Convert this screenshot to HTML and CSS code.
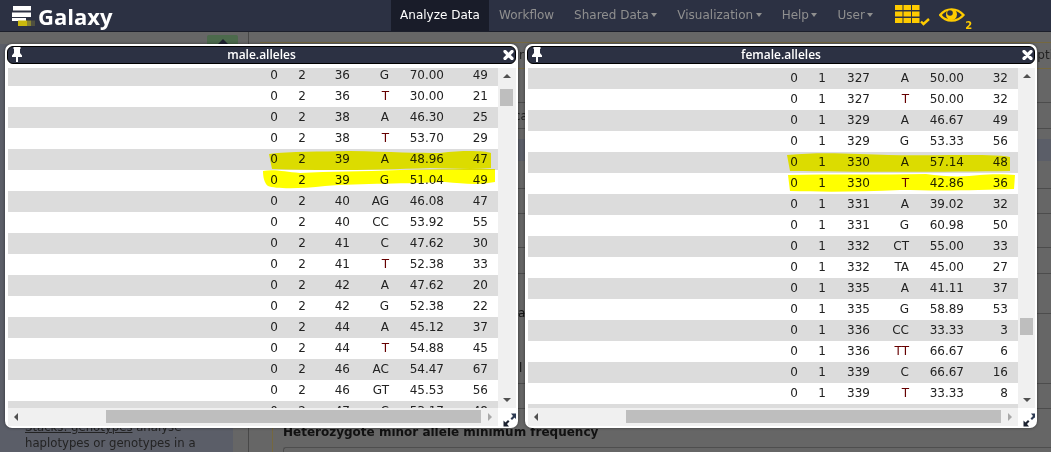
FILE: index.html
```html
<!DOCTYPE html>
<html lang="en">
<head>
<meta charset="utf-8">
<title>Galaxy</title>
<link rel="stylesheet" href="styles.css">
</head>
<body>
<header class="masthead">
  <div class="brand">
    <svg class="logo" width="25" height="24" viewBox="0 0 25 24">
      <rect x="2" y="0" width="18" height="4.500" fill="#fff"/>
      <rect x="1" y="6.500" width="19" height="4.500" fill="#fff"/>
      <rect x="1" y="12" width="14" height="3" fill="#fff"/>
      <rect x="7" y="14.500" width="9" height="5.500" fill="#c9b80c"/>
      <rect x="16" y="14.500" width="4" height="5.500" fill="#8a8530"/>
      <rect x="20" y="14.500" width="4" height="5.500" fill="#4f5040"/>
    </svg>
    <span class="brand-name">Galaxy</span>
  </div>
  <nav class="nav">
    <a class="nav-item active">Analyze Data</a>
    <a class="nav-item">Workflow</a>
    <a class="nav-item caret">Shared Data</a>
    <a class="nav-item caret">Visualization</a>
    <a class="nav-item caret">Help</a>
    <a class="nav-item caret">User</a>
  </nav>
  <div class="status">
    <svg class="grid-icon" width="36" height="27" viewBox="0 0 36 27">
      <g fill="#fecb00">
        <rect x="0" y="5" width="7.500" height="5"/><rect x="8.500" y="5" width="7.500" height="5"/><rect x="17" y="5" width="7.500" height="5"/>
        <rect x="0" y="11.500" width="7.500" height="5"/><rect x="8.500" y="11.500" width="7.500" height="5"/><rect x="17" y="11.500" width="7.500" height="5"/>
        <rect x="0" y="18" width="7.500" height="5"/><rect x="8.500" y="18" width="7.500" height="5"/><rect x="17" y="18" width="7.500" height="5"/>
      </g>
      <path d="M26 21.500 l2.500 2.500 l5.500-5" fill="none" stroke="#fecb00" stroke-width="2.400"/>
    </svg>
    <span class="eye-icon">
      <svg width="26" height="27" viewBox="0 0 26 27">
        <path d="M1.200 15 C7 7.500 18 7.500 24.500 15 C18 22.500 7 22.500 1.200 15Z" fill="none" stroke="#fecb00" stroke-width="2.400"/>
        <circle cx="12.500" cy="14.500" r="5.500" fill="#fecb00"/>
        <circle cx="11" cy="13" r="2.800" fill="#2c3143"/>
      </svg>
      <span class="eye-count">2</span>
    </span>
  </div>
</header>

<main class="backdrop">
  <aside class="tool-panel">
    <div class="collapse-tab"><span class="collapse-arrow"></span></div>
    <p class="tool-help"><u>Stacks: genotypes</u> analyse<br>haplotypes or genotypes in a</p>
  </aside>
  <section class="center">
    <div class="band"></div>
    <div class="form">
      <div class="line l34"></div>
      <div class="line l26"></div>
      <div class="gap10"></div>
      <div class="selected"></div>
      <div class="line l28"></div>
      <div class="line l25"></div>
      <div class="line l34"></div>
      <div class="line l26"></div>
      <div class="line l40"></div>
      <div class="line l70"></div>
      <div class="line l25"></div>
      <h4 class="form-label">Heterozygote minor allele minimum frequency</h4>
      <div class="form-input"></div>
    </div>
    <span class="peek opti">opti</span>
    <span class="peek gap-r">r</span>
    <span class="peek gap-c">ca</span>
    <span class="peek gap-a">a</span>
    <span class="peek gap-l">l</span>
  </section>
</main>

<article class="window left-win">
  <div class="title-bar">
    <svg class="pin" width="10" height="15" viewBox="0 0 10 15"><path d="M1.500 0h7v2H8v4l2 2.500V10H6v5H4v-5H0V8.500L2 6V2h-.5z" fill="#fff"/></svg>
    <span class="title-text">male.alleles</span>
    <svg class="close" width="11" height="10" viewBox="0 0 11 10"><path d="M2 1.500l7 7M9 1.500l-7 7" stroke="#fff" stroke-width="3.200" stroke-linecap="round"/></svg>
  </div>
  <div class="viewport">
    <div class="rows offset-left">
      <div class="row"><span>0</span><span>2</span><span>36</span><span>G</span><span>70.00</span><span>49</span></div>
      <div class="row"><span>0</span><span>2</span><span>36</span><span class="allele-t">T</span><span>30.00</span><span>21</span></div>
      <div class="row"><span>0</span><span>2</span><span>38</span><span>A</span><span>46.30</span><span>25</span></div>
      <div class="row"><span>0</span><span>2</span><span>38</span><span class="allele-t">T</span><span>53.70</span><span>29</span></div>
      <div class="row"><span>0</span><span>2</span><span>39</span><span>A</span><span>48.96</span><span>47</span></div>
      <div class="row"><span>0</span><span>2</span><span>39</span><span>G</span><span>51.04</span><span>49</span></div>
      <div class="row"><span>0</span><span>2</span><span>40</span><span>AG</span><span>46.08</span><span>47</span></div>
      <div class="row"><span>0</span><span>2</span><span>40</span><span>CC</span><span>53.92</span><span>55</span></div>
      <div class="row"><span>0</span><span>2</span><span>41</span><span>C</span><span>47.62</span><span>30</span></div>
      <div class="row"><span>0</span><span>2</span><span>41</span><span class="allele-t">T</span><span>52.38</span><span>33</span></div>
      <div class="row"><span>0</span><span>2</span><span>42</span><span>A</span><span>47.62</span><span>20</span></div>
      <div class="row"><span>0</span><span>2</span><span>42</span><span>G</span><span>52.38</span><span>22</span></div>
      <div class="row"><span>0</span><span>2</span><span>44</span><span>A</span><span>45.12</span><span>37</span></div>
      <div class="row"><span>0</span><span>2</span><span>44</span><span class="allele-t">T</span><span>54.88</span><span>45</span></div>
      <div class="row"><span>0</span><span>2</span><span>46</span><span>AC</span><span>54.47</span><span>67</span></div>
      <div class="row"><span>0</span><span>2</span><span>46</span><span>GT</span><span>45.53</span><span>56</span></div>
      <div class="row"><span>0</span><span>2</span><span>47</span><span>C</span><span>53.17</span><span>48</span></div>
    </div>
    <div class="v-scroll">
      <span class="arrow up"></span>
      <span class="v-thumb thumb-top"></span>
      <span class="arrow down"></span>
    </div>
    <div class="h-scroll">
      <span class="arrow lft"></span>
      <span class="h-thumb"></span>
      <span class="arrow rgt"></span>
    </div>
    <svg class="resize" width="14" height="14" viewBox="0 0 14 14"><path d="M13.500 .5v6l-2-2-2.500 2.500-1.500-1.500L10 3 8 .5z" fill="#2d3a52"/><path d="M.5 13.500v-6l2 2L5 7l1.500 1.500L4 11l2 2.500z" fill="#1c2230"/></svg>
  </div>
</article>

<article class="window right-win">
  <div class="title-bar">
    <svg class="pin" width="10" height="15" viewBox="0 0 10 15"><path d="M1.500 0h7v2H8v4l2 2.500V10H6v5H4v-5H0V8.500L2 6V2h-.5z" fill="#fff"/></svg>
    <span class="title-text">female.alleles</span>
    <svg class="close" width="11" height="10" viewBox="0 0 11 10"><path d="M2 1.500l7 7M9 1.500l-7 7" stroke="#fff" stroke-width="3.200" stroke-linecap="round"/></svg>
  </div>
  <div class="viewport">
    <div class="rows">
      <div class="row"><span>0</span><span>1</span><span>327</span><span>A</span><span>50.00</span><span>32</span></div>
      <div class="row"><span>0</span><span>1</span><span>327</span><span class="allele-t">T</span><span>50.00</span><span>32</span></div>
      <div class="row"><span>0</span><span>1</span><span>329</span><span>A</span><span>46.67</span><span>49</span></div>
      <div class="row"><span>0</span><span>1</span><span>329</span><span>G</span><span>53.33</span><span>56</span></div>
      <div class="row"><span>0</span><span>1</span><span>330</span><span>A</span><span>57.14</span><span>48</span></div>
      <div class="row"><span>0</span><span>1</span><span>330</span><span class="allele-t">T</span><span>42.86</span><span>36</span></div>
      <div class="row"><span>0</span><span>1</span><span>331</span><span>A</span><span>39.02</span><span>32</span></div>
      <div class="row"><span>0</span><span>1</span><span>331</span><span>G</span><span>60.98</span><span>50</span></div>
      <div class="row"><span>0</span><span>1</span><span>332</span><span>CT</span><span>55.00</span><span>33</span></div>
      <div class="row"><span>0</span><span>1</span><span>332</span><span>TA</span><span>45.00</span><span>27</span></div>
      <div class="row"><span>0</span><span>1</span><span>335</span><span>A</span><span>41.11</span><span>37</span></div>
      <div class="row"><span>0</span><span>1</span><span>335</span><span>G</span><span>58.89</span><span>53</span></div>
      <div class="row"><span>0</span><span>1</span><span>336</span><span>CC</span><span>33.33</span><span>3</span></div>
      <div class="row"><span>0</span><span>1</span><span>336</span><span class="allele-t">TT</span><span>66.67</span><span>6</span></div>
      <div class="row"><span>0</span><span>1</span><span>339</span><span>C</span><span>66.67</span><span>16</span></div>
      <div class="row"><span>0</span><span>1</span><span>339</span><span class="allele-t">T</span><span>33.33</span><span>8</span></div>
      <div class="row"></div>
    </div>
    <div class="v-scroll">
      <span class="arrow up"></span>
      <span class="v-thumb thumb-bottom"></span>
      <span class="arrow down"></span>
    </div>
    <div class="h-scroll">
      <span class="arrow lft"></span>
      <span class="h-thumb"></span>
      <span class="arrow rgt"></span>
    </div>
    <svg class="resize" width="14" height="14" viewBox="0 0 14 14"><path d="M13.500 .5v6l-2-2-2.500 2.500-1.500-1.500L10 3 8 .5z" fill="#2d3a52"/><path d="M.5 13.500v-6l2 2L5 7l1.500 1.500L4 11l2 2.500z" fill="#1c2230"/></svg>
  </div>
</article>

<svg class="marker" width="1051" height="452" viewBox="0 0 1051 452">
  <path d="M269 154 C290 151 320 152 350 151 C390 152 420 153 440 153 C465 150 485 151 491 153 L491 168 C470 170 450 168 430 168 C380 170 320 171 272 169Z"/>
  <path d="M263 171 C275 169 285 172 300 173 C330 171 360 172 400 170 C440 169 470 169 495 169 L495 182 C480 185 465 184 445 182 C410 184 360 183 325 186 C300 189 275 189 268 186 C264 183 263 176 263 171Z"/>
  <path d="M787 155 C810 153 830 153 860 154 C900 156 930 155 960 155 C980 155 1000 155 1010 157 L1010 171 C950 172 850 172 790 171Z"/>
  <path d="M788 175 C830 174 880 175 926 174 C945 177 965 177 980 175 C990 174 1005 174 1015 175 L1014 189 C980 190 950 191 900 190 C860 192 820 192 790 191Z"/>
</svg>
</body>
</html>
```
FILE: styles.css
```css
* { box-sizing: border-box; }
html, body { margin: 0; padding: 0; }
body {
  width: 1051px;
  height: 452px;
  overflow: hidden;
  position: relative;
  background: #666;
  font-family: "DejaVu Sans", sans-serif;
}
.masthead {
  height: 32px;
  background: #2c3143;
  border-bottom: 1px solid #1c1f2b;
  display: flex;
  align-items: stretch;
}
.brand {
  width: 391px;
  display: flex;
  align-items: center;
  padding-left: 11px;
  gap: 2px;
}
.logo { display: block; align-self: flex-start; margin-top: 6px; }
.brand-name {
  color: #fff;
  font: bold 22px "Open Sans", sans-serif;
  line-height: 28px;
}
.nav { display: flex; }
.nav-item {
  color: #8f8f8f;
  font: 12px "DejaVu Sans", sans-serif;
  line-height: 30px;
  padding: 0 10px;
  white-space: nowrap;
}
.nav-item.active {
  color: #fff;
  background: #191c29;
  width: 98px;
  padding: 0;
  text-align: center;
}
.caret::after {
  content: "";
  display: inline-block;
  width: 0;
  height: 0;
  margin-left: 2.500px;
  vertical-align: 2px;
  border-left: 3.5px solid transparent;
  border-right: 3.5px solid transparent;
  border-top: 4px solid #8f8f8f;
}
.status { display: flex; margin-left: 12px; gap: 8px; }
.grid-icon { display: block; }
.eye-icon { position: relative; width: 34px; }
.eye-icon svg { display: block; }
.eye-count {
  position: absolute;
  left: 26px;
  top: 20px;
  color: #fecb00;
  font: bold 10px/12px "DejaVu Sans", sans-serif;
}
.backdrop { display: flex; height: 420px; }
.tool-panel {
  width: 249px;
  flex: none;
  background: #666;
  border-right: 1px solid #484848;
  display: flex;
  flex-direction: column;
}
.collapse-tab {
  width: 31px;
  height: 9px;
  margin: 3px 0 0 207px;
  background: #4c6a4c;
  border-radius: 2px 2px 0 0;
  display: flex;
  justify-content: center;
  align-items: flex-end;
}
.collapse-arrow {
  border-left: 5px solid transparent;
  border-right: 5px solid transparent;
  border-bottom: 5px solid #1f2230;
}
.tool-help {
  margin: 0;
  flex: 1;
  width: 233px;
  background: #5b5e68;
  padding: 375px 0 0 25px;
  color: #232323;
  font-size: 11.7px;
  line-height: 16px;
  white-space: nowrap;
  overflow: hidden;
}
.center { flex: 1; position: relative; }
.band {
  margin: 10px 0 0 11px;
  height: 27px;
  border-top: 1px solid #75683f;
  border-bottom: 1px solid #75683f;
}
.form {
  margin-left: 23px;
  border-left: 1px solid #75683f;
}
.line { border-bottom: 1px solid #4c4c4c; }
.l34 { height: 34px; }
.l26 { height: 26px; }
.l28 { height: 28px; }
.l25 { height: 25px; }
.l40 { height: 40px; }
.l70 { height: 70px; }
.gap10 { height: 10px; }
.selected { height: 22px; background: #5b5e68; }
.form-label {
  margin: 0;
  padding: 13px 0 0 10px;
  height: 38px;
  color: #111;
  font: bold 12px/20px "DejaVu Sans", sans-serif;
  white-space: nowrap;
}
.form-input {
  margin-left: 10px;
  height: 12px;
  border: 1px solid #4e4e4e;
  border-right: none;
  border-radius: 3px 0 0 0;
}
.peek { position: absolute; color: #222; font-size: 12px; line-height: 16px; }
.opti { left: 781px; top: 15px; }
.gap-r { left: 270px; top: 15px; }
.gap-c { left: 265px; top: 76px; }
.gap-a { left: 269px; top: 273px; color: #111; }
.gap-l { left: 270px; top: 328px; color: #111; }
.window {
  position: absolute;
  top: 44px;
  height: 384px;
  background: #fff;
  border-radius: 7px;
  box-shadow: 0 0 3px rgba(0,0,0,.5);
  padding: 2px;
}
.left-win { left: 5px; width: 513px; }
.right-win { left: 525px; width: 512px; }
.title-bar {
  height: 18px;
  background: #2c3143;
  border: 1px solid #000;
  border-radius: 6px;
  display: flex;
  align-items: center;
  justify-content: center;
  position: relative;
}
.pin { position: absolute; left: 4px; top: 0; }
.title-text {
  color: #fff;
  font: 600 12px "Open Sans", sans-serif;
  line-height: 16px;
}
.close { position: absolute; right: 1px; top: 3px; }
.viewport {
  position: relative;
  height: 361px;
  margin: 4px 0 0 1px;
  overflow: hidden;
}
.rows {
  width: 490px;
  height: 340px;
  overflow: hidden;
}
.offset-left { margin-top: -3px; height: 343px; }
.row {
  display: grid;
  grid-template-columns: 270px 28px 44px 39px 55px 44px 10px;
  height: 21px;
  line-height: 20px;
  font-size: 12px;
  color: #222;
  text-align: right;
}
.row:nth-child(odd) { background: #dcdcdc; }
.allele-t { color: #600; }
.v-scroll {
  position: absolute;
  left: 490px;
  top: 0;
  width: 18px;
  height: 340px;
  background: #f0f0f0;
}
.v-thumb {
  position: absolute;
  left: 2px;
  width: 13px;
  height: 17px;
  background: #bebebe;
}
.thumb-top { top: 21px; }
.thumb-bottom { top: 250px; }
.h-scroll {
  position: absolute;
  left: 0;
  top: 340px;
  width: 490px;
  height: 18px;
  background: #f0f0f0;
}
.h-thumb {
  position: absolute;
  left: 98px;
  top: 2px;
  width: 375px;
  height: 13px;
  background: #bebebe;
}
.arrow { position: absolute; width: 0; height: 0; }
.up {
  left: 5px; top: 6px;
  border-left: 4px solid transparent;
  border-right: 4px solid transparent;
  border-bottom: 4px solid #505050;
}
.down {
  left: 5px; bottom: 6px;
  border-left: 4px solid transparent;
  border-right: 4px solid transparent;
  border-top: 4px solid #505050;
}
.lft {
  left: 6px; top: 5px;
  border-top: 4px solid transparent;
  border-bottom: 4px solid transparent;
  border-right: 4px solid #505050;
}
.rgt {
  right: 6px; top: 5px;
  border-top: 4px solid transparent;
  border-bottom: 4px solid transparent;
  border-left: 4px solid #a8a8a8;
}
.resize { position: absolute; left: 495px; top: 345px; }
.marker {
  position: absolute;
  left: 0;
  top: 0;
  fill: #ff0;
  mix-blend-mode: multiply;
  pointer-events: none;
}
```
